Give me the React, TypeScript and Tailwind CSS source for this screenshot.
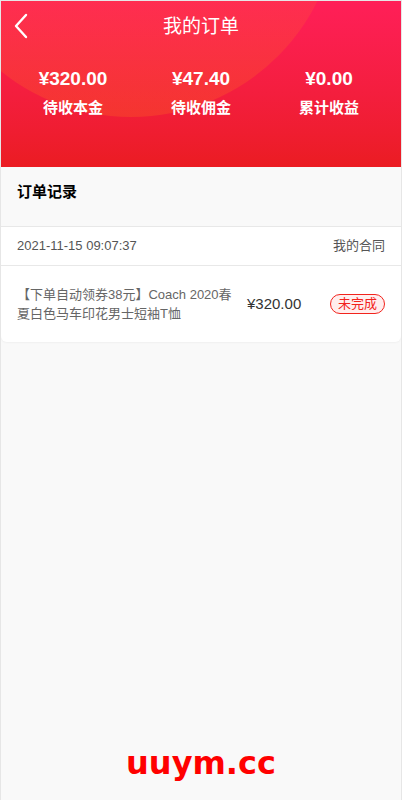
import React from 'react';

const stats = [
  { value: '¥320.00', label: '待收本金' },
  { value: '¥47.40', label: '待收佣金' },
  { value: '¥0.00', label: '累计收益' },
];

export default function App() {
  return (
    <div
      className="relative min-h-[800px] w-[402px] bg-[#f9f9f9] border-x border-t border-[#e6e6e6] overflow-hidden"
      style={{ fontFamily: '"Liberation Sans", "Noto Sans CJK SC", sans-serif' }}
    >
      {/* header */}
      <div className="relative h-[166px] overflow-hidden bg-gradient-to-b from-[#ff1f58] to-[#eb1c22]">
        <div className="absolute left-[-78px] top-[-300px] h-[416px] w-[416px] rounded-full bg-gradient-to-b from-[#ffffff0a] via-[#ff6a4018] to-[#ff7a1a40]" />
        <div className="relative flex h-[52px] items-center justify-center">
          <button className="absolute left-[11px] top-[12px] text-white">
            <svg width="18" height="26" viewBox="0 0 18 26" fill="none">
              <path d="M14 2 L4 13 L14 24" stroke="white" strokeWidth="2.4" strokeLinecap="round" strokeLinejoin="round" />
            </svg>
          </button>
          <h1 className="text-[19px] text-white">我的订单</h1>
        </div>
        <div className="relative grid grid-cols-3 px-[8px] pt-[12px]">
          {stats.map((s) => (
            <div key={s.label} className="flex flex-col items-center text-white">
              <span className="text-[19px] font-bold leading-[28px]">{s.value}</span>
              <span className="mt-[1px] text-[15px] font-bold leading-[28px]">{s.label}</span>
            </div>
          ))}
        </div>
      </div>

      {/* records */}
      <div className="px-[16px] pt-[13px] pb-[22px]">
        <h2 className="text-[15px] font-bold leading-[24px] text-black">订单记录</h2>
      </div>

      <div className="rounded-b-[6px] bg-white shadow-[0_1px_2px_rgba(0,0,0,0.04)]">
        <div className="flex h-[40px] items-center justify-between border-y border-[#e8e8e8] px-[16px] text-[13px] text-[#555]">
          <span>2021-11-15 09:07:37</span>
          <span>我的合同</span>
        </div>
        <div className="flex h-[76px] items-center px-[16px]">
          <p className="w-[216px] text-[13px] leading-[19px] text-[#666]">
            【下单自动领券38元】Coach 2020春夏白色马车印花男士短袖T恤
          </p>
          <span className="ml-[14px] text-[15px] text-[#333]">¥320.00</span>
          <span className="ml-auto rounded-full border border-[#f2231c] bg-[#ffeeee] px-[7px] text-[13px] leading-[18px] text-[#f2231c]">
            未完成
          </span>
        </div>
      </div>

      {/* watermark */}
      <div
        className="absolute left-0 right-0 top-[738px] text-center text-[32px] font-bold text-[#ff0000]"
        style={{ fontFamily: '"DejaVu Sans", sans-serif' }}
      >
        uuym.cc
      </div>
    </div>
  );
}
